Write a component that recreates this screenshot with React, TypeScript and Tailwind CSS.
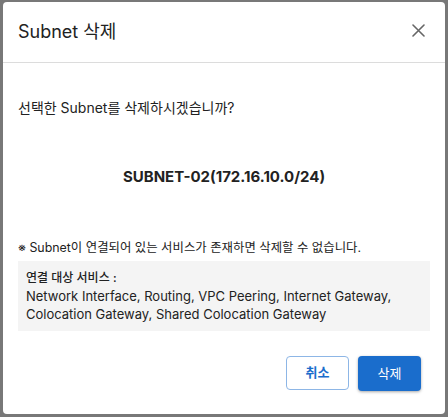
import React from "react";

export default function App() {
  return (
    <div
      className="w-[448px] h-[417px] bg-[#787878] pt-[2px] pl-[3px] pr-[3px] pb-[3px]"
      style={{ fontFamily: 'Inter, "Noto Sans CJK KR", sans-serif' }}
    >
      <div className="h-full w-full bg-white rounded-[4px] flex flex-col text-[#222]">
        <div className="h-[61px] flex items-center justify-between pl-[15px] pr-[20px] border-b border-[#dcdcdc]">
          <div className="text-[18px] leading-none">Subnet 삭제</div>
          <svg width="13" height="13" viewBox="0 0 13 13" className="mt-[-3px]">
            <path d="M1 1 L12 12 M12 1 L1 12" stroke="#666" strokeWidth="1.6" strokeLinecap="round" />
          </svg>
        </div>
        <div className="px-[15px] flex flex-col">
          <div className="mt-[36px] text-[14px] leading-[18px]">선택한 Subnet를 삭제하시겠습니까?</div>
          <div className="mt-[51px] text-center text-[15px] font-bold leading-[18px]">SUBNET-02(172.16.10.0/24)</div>
          <div className="mt-[54px] text-[12.4px] leading-[16px]">※ Subnet이 연결되어 있는 서비스가 존재하면 삭제할 수 없습니다.</div>
          <div className="mt-[5px] bg-[#f4f4f4] px-[8px] py-[8px] text-[13px] leading-[18px]">
            <div className="text-[12px] font-medium">연결 대상 서비스 :</div>
            <div>Network Interface, Routing, VPC Peering, Internet Gateway,</div>
            <div>Colocation Gateway, Shared Colocation Gateway</div>
          </div>
          <div className="mt-[25px] flex justify-end gap-[9px] pr-[9px]">
            <button className="w-[63px] h-[34px] rounded-[4px] border border-[#8db6e6] text-[#1a6dcc] text-[13px] font-semibold bg-white">
              취소
            </button>
            <button className="w-[63px] h-[35px] rounded-[4px] bg-[#1a6dcc] text-white text-[13px] shadow-[0_1px_3px_rgba(0,0,0,0.35)]">
              삭제
            </button>
          </div>
        </div>
      </div>
    </div>
  );
}
